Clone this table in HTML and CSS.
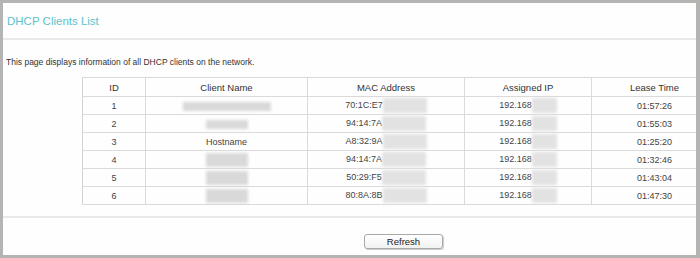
FILE: index.html
```
<!DOCTYPE html>
<html>
<head>
<meta charset="utf-8">
<link rel="stylesheet" href="styles.css">
</head>
<body>
<div class="frame">
  <div class="header"><span class="title">DHCP Clients List</span></div>
  <p class="desc">This page displays information of all DHCP clients on the network.</p>
  <div class="table-wrap">
    <table class="clients">
      <colgroup>
        <col class="c-id"><col class="c-name"><col class="c-mac"><col class="c-ip"><col class="c-lease">
      </colgroup>
      <thead>
        <tr><th>ID</th><th>Client Name</th><th>MAC Address</th><th>Assigned IP</th><th>Lease Time</th></tr>
      </thead>
      <tbody>
        <tr><td>1</td><td><span class="blur b-name-long"></span></td><td>70:1C:E7<span class="blur b-mac"></span></td><td>192.168<span class="blur b-ip"></span></td><td>01:57:26</td></tr>
        <tr><td>2</td><td><span class="blur b-name"></span></td><td>94:14:7A<span class="blur b-mac"></span></td><td>192.168<span class="blur b-ip"></span></td><td>01:55:03</td></tr>
        <tr><td>3</td><td>Hostname</td><td>A8:32:9A<span class="blur b-mac"></span></td><td>192.168<span class="blur b-ip"></span></td><td>01:25:20</td></tr>
        <tr><td>4</td><td><span class="blur b-name tall"></span></td><td>94:14:7A<span class="blur b-mac"></span></td><td>192.168<span class="blur b-ip"></span></td><td>01:32:46</td></tr>
        <tr><td>5</td><td><span class="blur b-name tall"></span></td><td>50:29:F5<span class="blur b-mac"></span></td><td>192.168<span class="blur b-ip"></span></td><td>01:43:04</td></tr>
        <tr><td>6</td><td><span class="blur b-name tall"></span></td><td>80:8A:8B<span class="blur b-mac"></span></td><td>192.168<span class="blur b-ip"></span></td><td>01:47:30</td></tr>
      </tbody>
    </table>
  </div>
  <div class="divider"></div>
  <div class="actions"><button class="btn">Refresh</button></div>
</div>
</body>
</html>
```
FILE: styles.css
```
html, body {
  margin: 0;
  padding: 0;
}
body {
  background: #b4b4b2;
  width: 700px;
  height: 258px;
  overflow: hidden;
  font-family: "Liberation Sans", Arial, sans-serif;
}
.frame {
  margin: 3px 4px 0 3px;
  height: 252px;
  background: #fdfefd;
  overflow: hidden;
}
.header {
  height: 35px;
  display: flex;
  align-items: center;
  padding-left: 4px;
  border-bottom: 2px solid #e8e9e8;
}
.title {
  font-size: 11.5px;
  color: #5cc3ca;
}
.desc {
  margin: 16px 0 0 3px;
  font-size: 8.5px;
  line-height: 12px;
  color: #333;
}
.table-wrap {
  margin-top: 9px;
  padding-left: 79px;
  width: 700px;
}
.clients {
  border-collapse: collapse;
  table-layout: fixed;
  width: 635px;
  font-size: 9px;
  color: #444;
}
.c-id { width: 63px; }
.c-name { width: 162px; }
.c-mac { width: 157px; }
.c-ip { width: 127px; }
.c-lease { width: 126px; }
.clients th, .clients td {
  border: 1px solid #dadada;
  text-align: center;
  padding: 0;
  white-space: nowrap;
}
.clients th {
  height: 18px;
  font-weight: normal;
  color: #333;
  font-size: 9.5px;
}
.clients td {
  height: 17px;
}
.clients tr td:first-child, .clients tr th:first-child {
  border-left-color: #d2d2d2;
}
.blur {
  display: inline-block;
  vertical-align: middle;
  background: #d9d9d9;
  filter: blur(1.5px);
  height: 12px;
}
.b-name-long { width: 88px; height: 9px; }
.b-name { width: 42px; height: 9px; }
.b-name.tall { height: 14px; }
.b-mac { width: 44px; height: 15px; background: #e2e2e2; }
.b-ip { width: 25px; height: 15px; background: #e2e2e2; }
.divider {
  margin-top: 11px;
  height: 2px;
  background: #e8e9e8;
}
.actions {
  padding: 16px 0 0 361px;
}
.btn {
  display: block;
  width: 79px;
  height: 15px;
  padding: 0;
  border: 1px solid #a9a9a9;
  border-radius: 3px;
  background: linear-gradient(#ffffff, #f2f2f2);
  box-shadow: 1px 1px 0 #cfcfcf;
  font-family: "Liberation Sans", Arial, sans-serif;
  font-size: 9.5px;
  color: #222;
}
```
